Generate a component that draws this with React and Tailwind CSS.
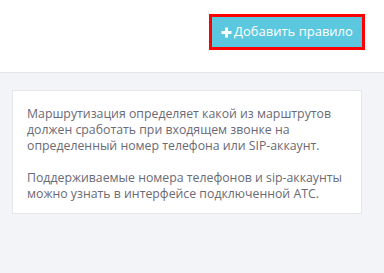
export default function App() {
  return (
    <div className="w-[384px] h-[273px] bg-[#f3f4f8] font-['Open_Sans',sans-serif]">
      <div className="h-[73px] bg-white border-b border-[#e4e6ea] flex justify-end items-start pt-[14px] pr-[19px]">
        <button className="border-[3px] border-[#ff0000] bg-[#5bc8e0] text-white text-[13px] h-[36px] w-[156px] flex items-center justify-center gap-[2px]">
          <svg width="11" height="11" viewBox="0 0 11 11" className="mt-[1px]">
            <path d="M5.5 0.5v10M0.5 5.5h10" stroke="white" strokeWidth="3" />
          </svg>
          <span>Добавить правило</span>
        </button>
      </div>
      <div className="px-3 pt-[17px]">
        <div className="w-[350px] bg-white border border-[#e4e6ea] pl-[14px] pr-3 pt-[15px] pb-[11px] text-[12.3px] leading-[16px] text-[#6a6a75]">
          <p>
            Маршрутизация определяет какой из марштрутов должен сработать при входящем звонке на
            определенный номер телефона или SIP-аккаунт.
          </p>
          <p className="mt-4">
            Поддерживаемые номера телефонов и sip-аккаунты можно узнать в интерфейсе подключенной АТС.
          </p>
        </div>
      </div>
    </div>
  );
}
